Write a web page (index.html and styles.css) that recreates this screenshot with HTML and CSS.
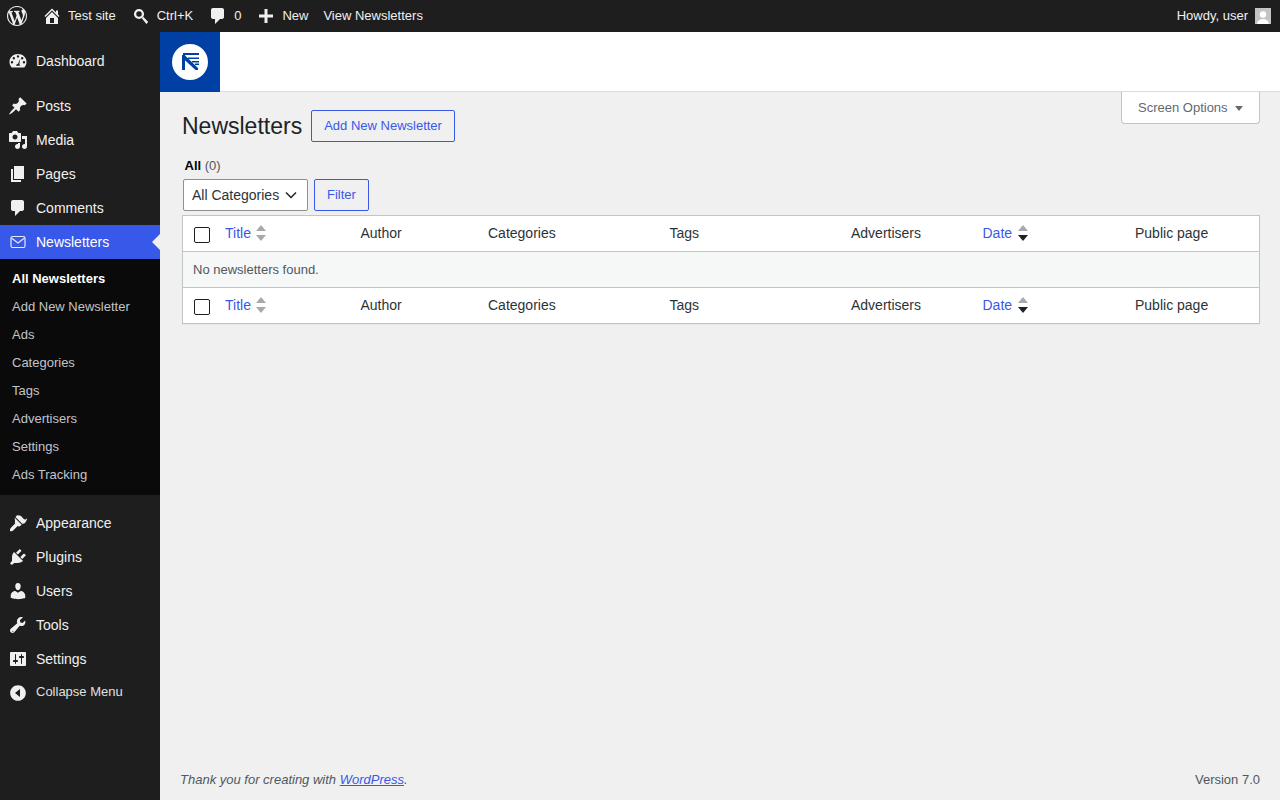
FILE: index.html
```html
<!DOCTYPE html>
<html lang="en">
<head>
    <meta charset="UTF-8">
    <title>Newsletters</title>
    <link rel="stylesheet" href="styles.css">
</head>
<body>
    <!-- admin bar -->
    <header class="adminbar">
        <a class="bar-item bar-logo"><svg class="bar-icon-wp" viewBox="0 0 20 20"><path d="M20 10c0-5.510-4.490-10-10-10C4.480 0 0 4.490 0 10c0 5.520 4.480 10 10 10 5.510 0 10-4.480 10-10zM7.780 15.370L4.370 6.220c.55-.02 1.170-.08 1.170-.08.5-.06.44-1.130-.06-1.110 0 0-1.450.11-2.370.11-.18 0-.37 0-.58-.01C4.120 2.690 6.870 1.110 10 1.110c2.330 0 4.450.87 6.050 2.340-.68-.11-1.650.39-1.650 1.580 0 .74.45 1.360.9 2.100.35.61.55 1.360.55 2.460 0 1.490-1.400 5-1.400 5l-3.030-8.370c.54-.02.82-.17.82-.17.5-.05.44-1.250-.06-1.220 0 0-1.440.12-2.380.12-.87 0-2.330-.12-2.330-.12-.5-.03-.56 1.200-.06 1.220l.92.080 1.260 3.410zM17.410 10c.24-.64.74-1.870.43-4.250.7 1.290 1.050 2.710 1.050 4.250 0 3.290-1.730 6.240-4.400 7.780.97-2.590 1.940-5.210 2.920-7.780zM6.100 18.090C3.120 16.650 1.110 13.530 1.110 10c0-1.300.23-2.480.72-3.590C3.250 10.300 4.670 14.200 6.100 18.090zm4.030-6.630l2.580 6.980c-.86.29-1.760.45-2.710.45-.79 0-1.570-.11-2.290-.33.81-2.380 1.620-4.740 2.420-7.100z"/></svg></a>
        <a class="bar-item bar-site"><svg class="bar-icon" viewBox="0 0 20 20"><path d="M16 8.500l1.530 1.530-1.060 1.060L10 4.620l-6.470 6.470-1.060-1.060L10 2.500l4 4v-2h2v4zm-6-2.460l6 5.990V18H4v-5.970zM12 17v-5H8v5h4z"/></svg>Test site</a>
        <a class="bar-item bar-search"><svg class="bar-icon" viewBox="0 0 20 20"><circle cx="8" cy="8" r="3.900" fill="none" stroke="#f0f0f0" stroke-width="2.300"/><path d="M10.800 12.300l1.500-1.500 4.900 5.200-1.800 2z"/></svg>Ctrl+K</a>
        <a class="bar-item bar-comments"><svg class="bar-icon" viewBox="0 0 20 20"><path d="M5 2h9c1.100 0 2 .9 2 2v7c0 1.100-.9 2-2 2h-2l-5 5v-5H5c-1.100 0-2-.9-2-2V4c0-1.100.9-2 2-2z"/></svg>0</a>
        <a class="bar-item bar-new"><svg class="bar-icon" viewBox="0 0 20 20"><path d="M17 8.500v3h-5.500V17h-3v-5.500H3v-3h5.500V3h3v5.500z"/></svg>New</a>
        <a class="bar-item bar-view">View Newsletters</a>
        <a class="bar-item bar-account">Howdy, user<span class="avatar"><svg viewBox="0 0 16 16"><rect width="16" height="16" fill="#c4c4c4"/><circle cx="8" cy="6.500" r="3.200" fill="#fff"/><path d="M2 16c.5-3.500 3-5 6-5s5.500 1.500 6 5z" fill="#fff"/></svg></span></a>
    </header>

    <div class="wrap-all">
        <!-- side menu -->
        <nav class="sidemenu">
            <a class="menu-item"><svg class="menu-icon" viewBox="0 0 20 20"><path fill-rule="evenodd" d="M3.760 16.500h12.480C17.300 15.400 18.500 13.300 18.500 11c0-4.700-3.800-8-8.500-8s-8.500 3.300-8.500 8c0 2.300 1.200 4.400 2.260 5.500zM10 4.200a1.200 1.200 0 1 1 0 2.400 1.200 1.200 0 0 1 0-2.400zM5.800 6a1.200 1.200 0 1 1 0 2.400 1.200 1.200 0 0 1 0-2.400zM14.200 6a1.200 1.200 0 1 1 0 2.400 1.200 1.200 0 0 1 0-2.400zM4 10a1.200 1.200 0 1 1 0 2.400A1.200 1.200 0 0 1 4 10zM16 10a1.200 1.200 0 1 1 0 2.400 1.200 1.200 0 0 1 0-2.400zM12.300 7.500l-1 5.700c.5.400.8 1 .8 1.600h-4c0-1.100.8-2 1.900-2.100z"/></svg>Dashboard</a>
            <div class="menu-sep"></div>
            <a class="menu-item"><svg class="menu-icon" viewBox="0 0 20 20"><path d="M10.440 3.020l1.820-1.820 6.360 6.350-1.830 1.820c-1.050-.68-2.480-.57-3.410.36l-.75.75c-.92.93-1.040 2.350-.35 3.410l-1.830 1.820-2.410-2.410-2.800 2.790c-.42.42-3.380 2.710-3.800 2.290s1.860-3.390 2.280-3.810l2.790-2.790L4.100 9.360l1.830-1.820c1.050.69 2.480.57 3.400-.36l.75-.75c.93-.92 1.050-2.350.36-3.410z"/></svg>Posts</a>
            <a class="menu-item"><svg class="menu-icon" viewBox="0 0 20 20"><path fill-rule="evenodd" d="M13 11V4c0-.55-.45-1-1-1h-1.670L9 1H5L3.670 3H2c-.55 0-1 .45-1 1v7c0 .55.45 1 1 1h10c.55 0 1-.45 1-1zM7 4.500c1.380 0 2.500 1.120 2.500 2.500S8.380 9.500 7 9.500 4.500 8.380 4.500 7 5.620 4.500 7 4.500zM14 6h5v10.500c0 1.380-1.120 2.500-2.500 2.500S14 17.880 14 16.500s1.120-2.500 2.500-2.500c.17 0 .34.020.5.050V9h-3V6zm-4 8.050V13h2v3.500c0 1.380-1.120 2.500-2.500 2.500S7 17.880 7 16.500 8.120 14 9.500 14c.17 0 .34.020.5.050z"/></svg>Media</a>
            <a class="menu-item"><svg class="menu-icon" viewBox="0 0 20 20"><path d="M6 15V2h10v13H6zm-1 1h8v2H3V5h2v11z"/></svg>Pages</a>
            <a class="menu-item"><svg class="menu-icon" viewBox="0 0 20 20"><path d="M5 2h9c1.100 0 2 .9 2 2v7c0 1.100-.9 2-2 2h-2l-5 5v-5H5c-1.100 0-2-.9-2-2V4c0-1.100.9-2 2-2z"/></svg>Comments</a>
            <a class="menu-item menu-current"><svg class="menu-icon" viewBox="0 0 20 20"><rect x="3" y="4.500" width="14" height="11" rx="1.500" fill="none" stroke="#e4e9fb" stroke-width="1.200"/><path d="M3.500 6l6.500 5 6.500-5" fill="none" stroke="#e4e9fb" stroke-width="1.200"/></svg>Newsletters</a>
            <ul class="submenu">
                <li class="sub-current">All Newsletters</li>
                <li>Add New Newsletter</li>
                <li>Ads</li>
                <li>Categories</li>
                <li>Tags</li>
                <li>Advertisers</li>
                <li>Settings</li>
                <li>Ads Tracking</li>
            </ul>
            <div class="menu-sep"></div>
            <a class="menu-item"><svg class="menu-icon" viewBox="0 0 20 20"><path d="M14.480 11.060L7.410 3.990l1.500-1.500c.5-.56 2.300-.47 3.510.32 1.210.8 1.430 1.280 2.660 2.510 1.230 1.220 2.170 1.370 3.010 1.250L18.900 4.900 19 6.500l-2 3.500zM6.700 4.700l7.070 7.070-2.100 1.400c-.6.400-1.400.3-1.900-.2l-.6.600-3.500 3.500c-.9.900-2.800 1.700-3.500 1-.7-.7.100-2.600 1-3.500l3.500-3.500.6-.6c-.5-.5-.6-1.300-.2-1.900z"/></svg>Appearance</a>
            <a class="menu-item"><svg class="menu-icon" viewBox="0 0 20 20"><path d="M13.110 4.360L9.870 7.600 8 5.730l3.240-3.240c.35-.34 1.050-.2 1.560.32.52.51.66 1.210.31 1.550zm-8 1.770l.91-1.120 9.010 9.010-1.190.84c-.71.71-2.630 1.160-3.820 1.160H6.140L4.900 17.260c-.59.59-1.540.59-2.120 0-.59-.58-.59-1.530 0-2.120l1.240-1.240v-3.880c0-1.130.4-3.190 1.090-3.890zm7.260 3.970l3.240-3.240c.34-.35 1.040-.21 1.550.31.52.51.66 1.210.31 1.550l-3.240 3.250z"/></svg>Plugins</a>
            <a class="menu-item"><svg class="menu-icon" viewBox="0 0 20 20"><path d="M10 9.250c-2.270 0-2.730-3.440-2.730-3.440C7 4.020 7.820 2 9.970 2c2.160 0 2.980 2.020 2.710 3.810 0 0-.41 3.440-2.680 3.440zm0 2.570L12.720 10c2.390 0 4.520 2.330 4.520 4.530v2.490s-3.650 1.130-7.240 1.130c-3.650 0-7.240-1.130-7.240-1.130v-2.490c0-2.250 1.940-4.480 4.470-4.480z"/></svg>Users</a>
            <a class="menu-item"><svg class="menu-icon" viewBox="0 0 20 20"><path fill-rule="evenodd" d="M16.680 9.770c-1.340 1.340-3.300 1.670-4.950.99l-5.410 6.520c-.99.99-2.590.99-3.570 0s-.99-2.590 0-3.570l6.520-5.420c-.68-1.650-.35-3.610.99-4.950 1.280-1.280 3.120-1.640 4.720-1.110L11.880 5.350l.53 2.120 2.120.53 2.600-2.600c.53 1.600.17 3.440-1.110 4.720zM4.860 17.070l.71-.71-.71-.71-.71.71.71.71z"/></svg>Tools</a>
            <a class="menu-item"><svg class="menu-icon" viewBox="0 0 20 20"><path fill-rule="evenodd" d="M18 16V4c0-.55-.45-1-1-1H3c-.55 0-1 .45-1 1v12c0 .55.45 1 1 1h14c.55 0 1-.45 1-1zM8 11h1c.55 0 1 .45 1 1s-.45 1-1 1H8v1.500c0 .28-.22.5-.5.5s-.5-.22-.5-.5V13H6c-.55 0-1-.45-1-1s.45-1 1-1h1V5.500c0-.28.22-.5.5-.5s.5.22.5.5V11zm5-2h-1c-.55 0-1-.45-1-1s.45-1 1-1h1V5.500c0-.28.22-.5.5-.5s.5.22.5.5V7h1c.55 0 1 .45 1 1s-.45 1-1 1h-1v5.500c0 .28-.22.5-.5.5s-.5-.22-.5-.5V9z"/></svg>Settings</a>
            <a class="menu-item menu-collapse"><svg class="menu-icon" viewBox="0 0 20 20"><path fill-rule="evenodd" d="M10 2.160c4.330 0 7.840 3.510 7.840 7.840s-3.510 7.840-7.840 7.840S2.160 14.330 2.160 10 5.670 2.160 10 2.160zM12 14V6l-5 4z"/></svg><span class="collapse-text">Collapse Menu</span></a>
        </nav>

        <div class="main">
            <div class="plugin-head">
                <div class="plugin-logo">
                    <svg viewBox="0 0 36 36" width="36" height="36">
                        <circle cx="18" cy="18" r="18" fill="#fff"/>
                        <g fill="#0040a5">
                            <path d="M10 11h3v15h-3z"/>
                            <path d="M10 11h2.500L26 24v2h-2.500L10 13.500z"/>
                            <path d="M11 9h16v2H11zM16 13.500h11V15H16zM20 17h7v1.500h-7zM23 19.500h4V21h-4z"/>
                        </g>
                    </svg>
                </div>
            </div>

            <div class="content">
                <button class="screen-options">Screen Options<span class="caret"></span></button>

                <div class="title-row">
                    <h1>Newsletters</h1>
                    <a class="btn">Add New Newsletter</a>
                </div>

                <div class="subsub"><b>All</b> <span>(0)</span></div>

                <div class="filters">
                    <div class="select">All Categories<svg viewBox="0 0 12 8" width="12" height="8"><path d="M1 1.500l5 5 5-5" fill="none" stroke="#1d2327" stroke-width="1.500"/></svg></div>
                    <a class="btn">Filter</a>
                </div>

                <table class="list-table">
                    <colgroup>
                        <col class="col-cb"><col class="col-title"><col class="col-author"><col class="col-cat"><col class="col-tags"><col class="col-adv"><col class="col-date"><col class="col-public">
                    </colgroup>
                    <thead>
                        <tr>
                            <td class="cb"><span class="checkbox"></span></td>
                            <th><a class="sort">Title<span class="arrows"><i class="up"></i><i class="down"></i></span></a></th>
                            <th>Author</th>
                            <th>Categories</th>
                            <th>Tags</th>
                            <th>Advertisers</th>
                            <th><a class="sort">Date<span class="arrows"><i class="up"></i><i class="down on"></i></span></a></th>
                            <th>Public page</th>
                        </tr>
                    </thead>
                    <tbody>
                        <tr><td class="empty" colspan="8">No newsletters found.</td></tr>
                    </tbody>
                    <tfoot>
                        <tr>
                            <td class="cb"><span class="checkbox"></span></td>
                            <th><a class="sort">Title<span class="arrows"><i class="up"></i><i class="down"></i></span></a></th>
                            <th>Author</th>
                            <th>Categories</th>
                            <th>Tags</th>
                            <th>Advertisers</th>
                            <th><a class="sort">Date<span class="arrows"><i class="up"></i><i class="down on"></i></span></a></th>
                            <th>Public page</th>
                        </tr>
                    </tfoot>
                </table>
            </div>

            <footer class="foot">
                <span class="thanks">Thank you for creating with <a>WordPress</a>.</span>
                <span>Version 7.0</span>
            </footer>
        </div>
    </div>
</body>
</html>
```

FILE: styles.css
```css
/* base */
* {
    box-sizing: border-box;
}

html, body {
    height: 100%;
}

body {
    margin: 0;
    overflow: hidden;
    font-family: "Liberation Sans", Arial, sans-serif;
    font-size: 13px;
    color: #3c434a;
    background: #f0f0f0;
}

/* admin bar */
.adminbar {
    display: flex;
    align-items: center;
    height: 32px;
    background: #1e1e1e;
    color: #f0f0f0;
    font-size: 13px;
}

.bar-item {
    display: flex;
    align-items: center;
    height: 32px;
    padding-bottom: 1px;
}

.bar-item svg {
    fill: #f0f0f0;
}

.bar-icon-wp {
    width: 20px;
    height: 20px;
}

.bar-icon {
    width: 20px;
    height: 20px;
    margin-right: 6px;
}

.bar-logo { margin-left: 7px; }
.bar-site { margin-left: 15px; }
.bar-search { margin-left: 15px; }
.bar-comments { margin-left: 15px; }
.bar-new { margin-left: 15px; }
.bar-view { margin-left: 15px; }

.bar-account {
    margin-left: auto;
    margin-right: 9px;
}

.avatar {
    display: block;
    width: 16px;
    height: 16px;
    margin-left: 7px;
}

.avatar svg {
    display: block;
}

/* side menu */
.wrap-all {
    display: flex;
    height: 768px;
}

.sidemenu {
    flex: 0 0 160px;
    padding-top: 12px;
    background: #1e1e1e;
}

.menu-item {
    display: flex;
    align-items: center;
    height: 34px;
    padding-left: 8px;
    font-size: 14px;
    color: #f0f0f0;
    position: relative;
}

.menu-icon {
    width: 20px;
    height: 20px;
    margin-right: 8px;
    fill: #f0f0f0;
}

.menu-sep {
    height: 11px;
}

.menu-current {
    background: #3858e9;
    color: #fff;
}

/* little arrow pointing to the content */
.menu-current::after {
    content: "";
    position: absolute;
    right: 0;
    top: 9px;
    border: 8px solid transparent;
    border-right-color: #f0f0f0;
    border-left-width: 0;
}

.menu-collapse {
    font-size: 13px;
    height: 32px;
    color: #e0e0e0;
}

.menu-collapse .menu-icon {
    margin-top: 2px;
}

.collapse-text {
    margin-bottom: 2px;
}

.submenu {
    list-style: none;
    margin: 0;
    padding: 6px 0 6px;
    background: #0a0a0a;
    font-size: 13px;
    color: #c3c4c7;
}

.submenu li {
    height: 28px;
    line-height: 28px;
    padding-left: 12px;
}

.sub-current {
    color: #fff;
    font-weight: 700;
}

/* main area */
.main {
    flex: 1;
    display: flex;
    flex-direction: column;
    min-width: 0;
}

.plugin-head {
    height: 60px;
    background: #fff;
    border-bottom: 1px solid #dcdcde;
}

.plugin-logo {
    display: flex;
    align-items: center;
    justify-content: center;
    width: 60px;
    height: 60px;
    background: #0040a5;
}

.plugin-logo svg {
    display: block;
}

.content {
    flex: 1;
    padding: 0 20px 0 22px;
}

.screen-options {
    float: right;
    display: flex;
    align-items: center;
    width: 139px;
    height: 32px;
    padding: 0 0 0 16px;
    background: #fff;
    border: 1px solid #c3c4c7;
    border-top: none;
    border-radius: 0 0 4px 4px;
    font: 13px "Liberation Sans", Arial, sans-serif;
    color: #646970;
}

.caret {
    margin-left: 7px;
    margin-top: 2px;
    border: 4.500px solid transparent;
    border-top: 5.500px solid #646970;
    border-bottom: none;
}

.title-row {
    display: flex;
    align-items: center;
    gap: 9px;
    padding-top: 18px;
}

h1 {
    margin: 0;
    font-size: 23px;
    font-weight: 400;
    line-height: 32px;
    color: #1d2327;
}

.btn {
    display: inline-flex;
    align-items: center;
    height: 32px;
    padding: 0 12px 2px;
    border: 1px solid #3858e9;
    border-radius: 2px;
    background: transparent;
    color: #3858e9;
    font-size: 13px;
}

.subsub {
    margin: 16px 0 0 2.500px;
    height: 16px;
    line-height: 16px;
    color: #50575e;
}

.subsub b {
    color: #000;
}

.filters {
    display: flex;
    gap: 6px;
    margin: 5px 0 4px 1px;
}

.select {
    display: flex;
    align-items: center;
    justify-content: space-between;
    width: 125px;
    height: 32px;
    padding: 0 10px 0 8px;
    background: #fff;
    border: 1px solid #8c8f94;
    border-radius: 2px;
    font-size: 14px;
    color: #2c3338;
}

/* table */
.list-table {
    width: 1078px;
    table-layout: fixed;
    border-collapse: separate;
    border-spacing: 0;
    background: #fff;
    border: 1px solid #c3c4c7;
    box-shadow: 0 1px 1px rgba(0,0,0,0.04);
}

.col-cb { width: 32px; }
.col-title { width: 135.500px; }
.col-author { width: 127.500px; }
.col-cat { width: 181.500px; }
.col-tags { width: 181.500px; }
.col-adv { width: 131.500px; }
.col-date { width: 152.500px; }

.list-table th,
.list-table td {
    height: 35px;
    padding: 0 10px;
    text-align: left;
    font-size: 14px;
    font-weight: 400;
    color: #2c3338;
    vertical-align: middle;
    padding-bottom: 2px;
}

.list-table tbody td {
    height: 37px;
    padding-bottom: 0;
    border-top: 1px solid #c3c4c7;
    border-bottom: 1px solid #c3c4c7;
    background: #f6f7f7;
    font-size: 13px;
    color: #50575e;
}

.list-table .cb {
    padding: 0 0 0 11px;
}

.checkbox {
    display: block;
    width: 16px;
    height: 16px;
    margin-top: 3px;
    background: #fff;
    border: 1px solid #1e1e1e;
    border-radius: 2px;
}

.sort {
    display: inline-flex;
    align-items: center;
    color: #3858e9;
}

.arrows {
    display: flex;
    flex-direction: column;
    gap: 4px;
    margin-left: 5.500px;
    margin-top: 1px;
}

.arrows i {
    display: block;
    border: 5px solid transparent;
}

.arrows .up {
    border-top: none;
    border-bottom: 6px solid #a7aaad;
}

.arrows .down {
    border-bottom: none;
    border-top: 6px solid #a7aaad;
}

.arrows .down.on {
    border-top-color: #1d2327;
}

/* footer */
.foot {
    display: flex;
    justify-content: space-between;
    padding: 0 20px;
    height: 28px;
    color: #50575e;
    font-size: 13px;
}

.thanks {
    font-style: italic;
}

.thanks a {
    color: #3858e9;
    text-decoration: underline;
}
```
